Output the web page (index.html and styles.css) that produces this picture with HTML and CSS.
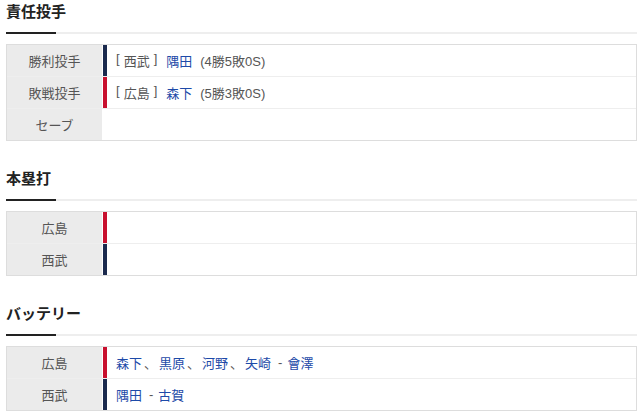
FILE: index.html
```html
<!DOCTYPE html>
<html lang="ja">
<head>
<meta charset="utf-8">
<link rel="stylesheet" href="styles.css">
</head>
<body>
<div class="page">
  <section class="block">
    <h2 class="title">責任投手</h2>
    <div class="table">
      <div class="row">
        <div class="label">勝利投手</div>
        <div class="value navy"><span class="team"><span>[</span><span>西武</span><span>]</span></span><a class="link">隅田</a><span class="rec">(4勝5敗0S)</span></div>
      </div>
      <div class="row">
        <div class="label">敗戦投手</div>
        <div class="value red"><span class="team"><span>[</span><span>広島</span><span>]</span></span><a class="link">森下</a><span class="rec">(5勝3敗0S)</span></div>
      </div>
      <div class="row">
        <div class="label">セーブ</div>
        <div class="value"></div>
      </div>
    </div>
  </section>
  <section class="block">
    <h2 class="title">本塁打</h2>
    <div class="table">
      <div class="row">
        <div class="label">広島</div>
        <div class="value red"></div>
      </div>
      <div class="row">
        <div class="label">西武</div>
        <div class="value navy"></div>
      </div>
    </div>
  </section>
  <section class="block">
    <h2 class="title">バッテリー</h2>
    <div class="table">
      <div class="row">
        <div class="label">広島</div>
        <div class="value red"><a class="link">森下</a><span class="sep">、</span><a class="link">黒原</a><span class="sep">、</span><a class="link">河野</a><span class="sep">、</span><a class="link">矢崎</a><span class="dash">-</span><a class="link">會澤</a></div>
      </div>
      <div class="row">
        <div class="label">西武</div>
        <div class="value navy"><a class="link">隅田</a><span class="dash">-</span><a class="link">古賀</a></div>
      </div>
    </div>
  </section>
</div>
</body>
</html>
```
FILE: styles.css
```css
* { box-sizing: border-box; }
html, body { margin: 0; padding: 0; background: #fff; }
body {
  font-family: "Liberation Sans", "Noto Sans CJK JP", sans-serif;
  color: #444;
}
.page {
  width: 631px;
  margin-left: 6px;
}
.block { margin-bottom: 26px; }
.title {
  position: relative;
  margin: 0;
  padding: 2px 0 10px;
  font-size: 15px;
  line-height: 20px;
  font-weight: bold;
  color: #222;
  border-bottom: 2px solid #eeeeee;
}
.title::after {
  content: "";
  position: absolute;
  left: 0;
  bottom: -2px;
  width: 50px;
  height: 2px;
  background: #222;
}
.table {
  margin-top: 10px;
  border: 1px solid #dddddd;
}
.row {
  display: flex;
  height: 32px;
  border-bottom: 1px solid #eeeeee;
}
.row:last-child { border-bottom: none; height: 31px; }
.label {
  width: 95px;
  background: #ebebeb;
  color: #555;
  font-size: 13px;
  display: flex;
  align-items: center;
  justify-content: center;
}
.value {
  flex: 1;
  margin-left: 1px;
  border-left: 4px solid transparent;
  padding-left: 9px;
  font-size: 13px;
  display: flex;
  align-items: center;
  color: #555;
}
.value.navy { border-left-color: #1b2a4e; }
.value.red { border-left-color: #c8102e; }
.team {
  display: inline-flex;
  gap: 4px;
  margin-right: 9px;
}
.link { color: #1d4aa8; text-decoration: none; }
.rec { margin-left: 8px; }
.sep { margin: 0 2px 0 2px; color: #555; }
.dash { margin: 0 5px 0 7px; color: #555; }
```
